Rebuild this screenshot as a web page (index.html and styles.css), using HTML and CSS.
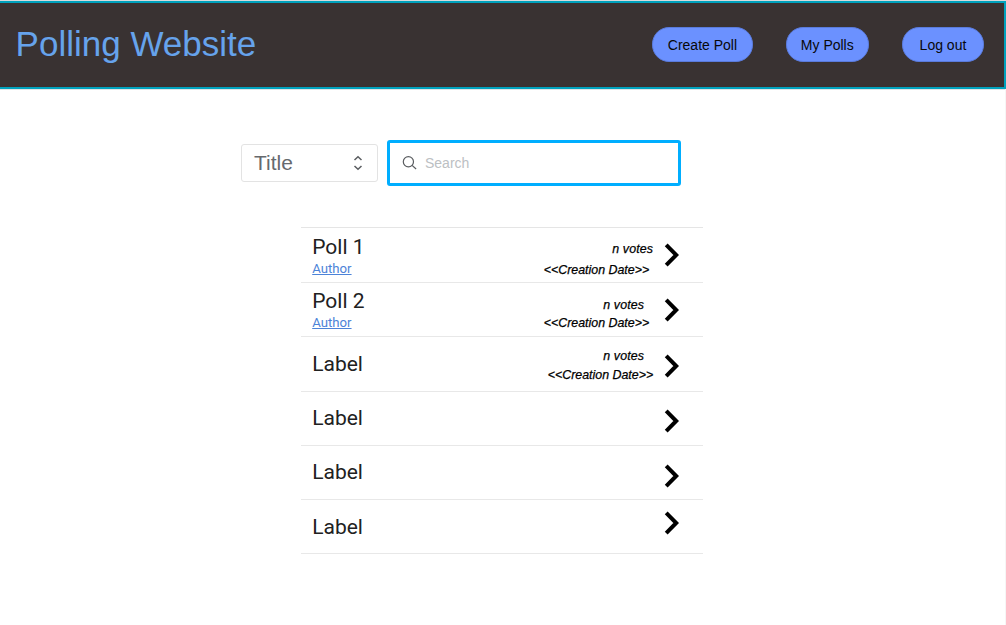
FILE: index.html
```html
<!DOCTYPE html>
<html lang="en">
<head>
<meta charset="utf-8">
<title>Polling Website</title>
<link rel="stylesheet" href="styles.css">
</head>
<body>
<svg class="defs" width="0" height="0" aria-hidden="true">
  <symbol id="chevron" viewBox="0 0 16 24"><path d="M2.2 1.8 12.2 12 2.2 22.2" fill="none" stroke="#000" stroke-width="4"/></symbol>
</svg>
<header class="header">
  <h1 class="brand">Polling Website</h1>
  <nav class="nav">
    <button class="pill pill-wide">Create Poll</button>
    <button class="pill">My Polls</button>
    <button class="pill">Log out</button>
  </nav>
</header>
<main class="main">
  <div class="filters">
    <div class="select">
      <span>Title</span>
      <svg class="sort" width="10" height="16" viewBox="0 0 10 16" fill="none" stroke="#5a5d60" stroke-width="1.5"><path d="M1.5 5 5 1.7 8.5 5M1.5 11 5 14.3 8.5 11"/></svg>
    </div>
    <label class="search">
      <svg width="16" height="16" viewBox="0 0 16 16" fill="none" stroke="#5a5d60" stroke-width="1.2"><circle cx="6.4" cy="6.7" r="5.1"/><path d="m10.1 10.4 4 3.6"/></svg>
      <span>Search</span>
    </label>
  </div>
  <ul class="polls">
    <li class="row row-tall">
      <div class="info"><div class="name">Poll 1</div><a class="author">Author</a></div>
      <div class="meta meta-first"><div class="votes">n votes</div><div class="date">&lt;&lt;Creation Date&gt;&gt;</div></div>
      <svg class="go" width="16" height="24"><use href="#chevron"/></svg>
    </li>
    <li class="row">
      <div class="info info-raised"><div class="name">Poll 2</div><a class="author">Author</a></div>
      <div class="meta meta-second"><div class="votes">n votes</div><div class="date">&lt;&lt;Creation Date&gt;&gt;</div></div>
      <svg class="go" width="16" height="24"><use href="#chevron"/></svg>
    </li>
    <li class="row row-tall">
      <div class="info info-single"><div class="name">Label</div></div>
      <div class="meta meta-third"><div class="votes">n votes</div><div class="date">&lt;&lt;Creation Date&gt;&gt;</div></div>
      <svg class="go go-mid" width="16" height="24"><use href="#chevron"/></svg>
    </li>
    <li class="row">
      <div class="info info-up"><div class="name">Label</div></div>
      <svg class="go go-mid" width="16" height="24"><use href="#chevron"/></svg>
    </li>
    <li class="row">
      <div class="info info-up"><div class="name">Label</div></div>
      <svg class="go go-lower" width="16" height="24"><use href="#chevron"/></svg>
    </li>
    <li class="row">
      <div class="info info-single"><div class="name">Label</div></div>
      <svg class="go go-last" width="16" height="24"><use href="#chevron"/></svg>
    </li>
  </ul>
</main>
</body>
</html>
```

FILE: styles.css
```css
* { box-sizing: border-box; }
body {
  margin: 0;
  height: 625px;
  overflow: hidden;
  background: #fff;
  font-family: "Liberation Sans", Arial, sans-serif;
  border-top: 1px solid #d9dcdd;
}
.defs { display: block; height: 0; }
.header {
  display: flex;
  justify-content: space-between;
  align-items: flex-start;
  height: 88px;
  padding: 0 19.7px 0 15.6px;
  background: #393232;
  border: 2px solid #00a2bd;
  border-left: 0;
  box-shadow: 0 1px 0 #dfe4e6;
}
.brand {
  margin: 20px 0 0;
  font-size: 35px;
  line-height: 42px;
  font-weight: 400;
  color: #66a3ec;
}
.nav { display: flex; gap: 33px; margin-top: 24px; }
.pill {
  width: 82.7px;
  height: 35px;
  padding: 1px 0 0;
  border: 1px solid #5a7bdc;
  border-radius: 17px;
  background: #6b91ff;
  color: #080808;
  font: 14px/32px "Liberation Sans", Arial, sans-serif;
  white-space: nowrap;
}
.pill-wide { width: 101px; }
.main {
  height: 536px;
  padding: 51px 0 0 241px;
  border-right: 1px solid #f6f6f6;
}
.filters { display: flex; align-items: center; gap: 9px; }
.select {
  display: flex;
  justify-content: space-between;
  align-items: center;
  width: 137px;
  height: 38px;
  padding: 0 14px 0 12px;
  border: 1px solid #e3e3e3;
  border-radius: 3px;
  font-size: 21px;
  color: #66696d;
}
.search {
  display: flex;
  align-items: center;
  gap: 7px;
  width: 294px;
  height: 46px;
  padding-left: 12px;
  border: 3px solid #00aeff;
  border-radius: 3px;
  font-size: 14px;
  color: #bcc0c3;
}
.polls {
  width: 402px;
  margin: 41px 0 0 60px;
  padding: 0;
  list-style: none;
  border-top: 1px solid #e5e5e5;
}
.row {
  display: flex;
  align-items: flex-start;
  height: 54px;
  padding: 0 23px 0 11.2px;
  border-bottom: 1px solid #e8e8e8;
}
.row-tall { height: 55px; }
.info {
  width: 110px;
  padding-top: 7px;
  font-family: Roboto, sans-serif;
  color: #212121;
}
.info-raised { padding-top: 6px; }
.info-single { padding-top: 15px; }
.info-up { padding-top: 14px; }
.name { font-size: 21px; line-height: 24px; }
.author {
  display: block;
  margin-top: 1px;
  font-size: 13.2px;
  line-height: 18px;
  color: #4c83d8;
  text-decoration: underline;
}
.meta {
  display: flex;
  flex-direction: column;
  align-items: flex-end;
  width: 231px;
  font-size: 12.4px;
  line-height: 16px;
  font-style: italic;
  color: #000;
  -webkit-text-stroke: 0.25px #000;
}
.votes { letter-spacing: 0.15px; }
.meta-first { padding: 13px 0 0; }
.meta-first .date { margin: 5px 4px 0 0; }
.meta-second { padding: 14px 4px 0 0; }
.meta-second .votes { margin-right: 5px; }
.meta-second .date { margin-top: 2px; }
.meta-third { padding-top: 11px; }
.meta-third .votes { margin-right: 9px; }
.meta-third .date { margin-top: 3px; }
.go { display: block; margin: 15px 0 0 auto; }
.go-mid { margin-top: 17px; }
.go-lower { margin-top: 18px; }
.go-last { margin-top: 11px; }
```
